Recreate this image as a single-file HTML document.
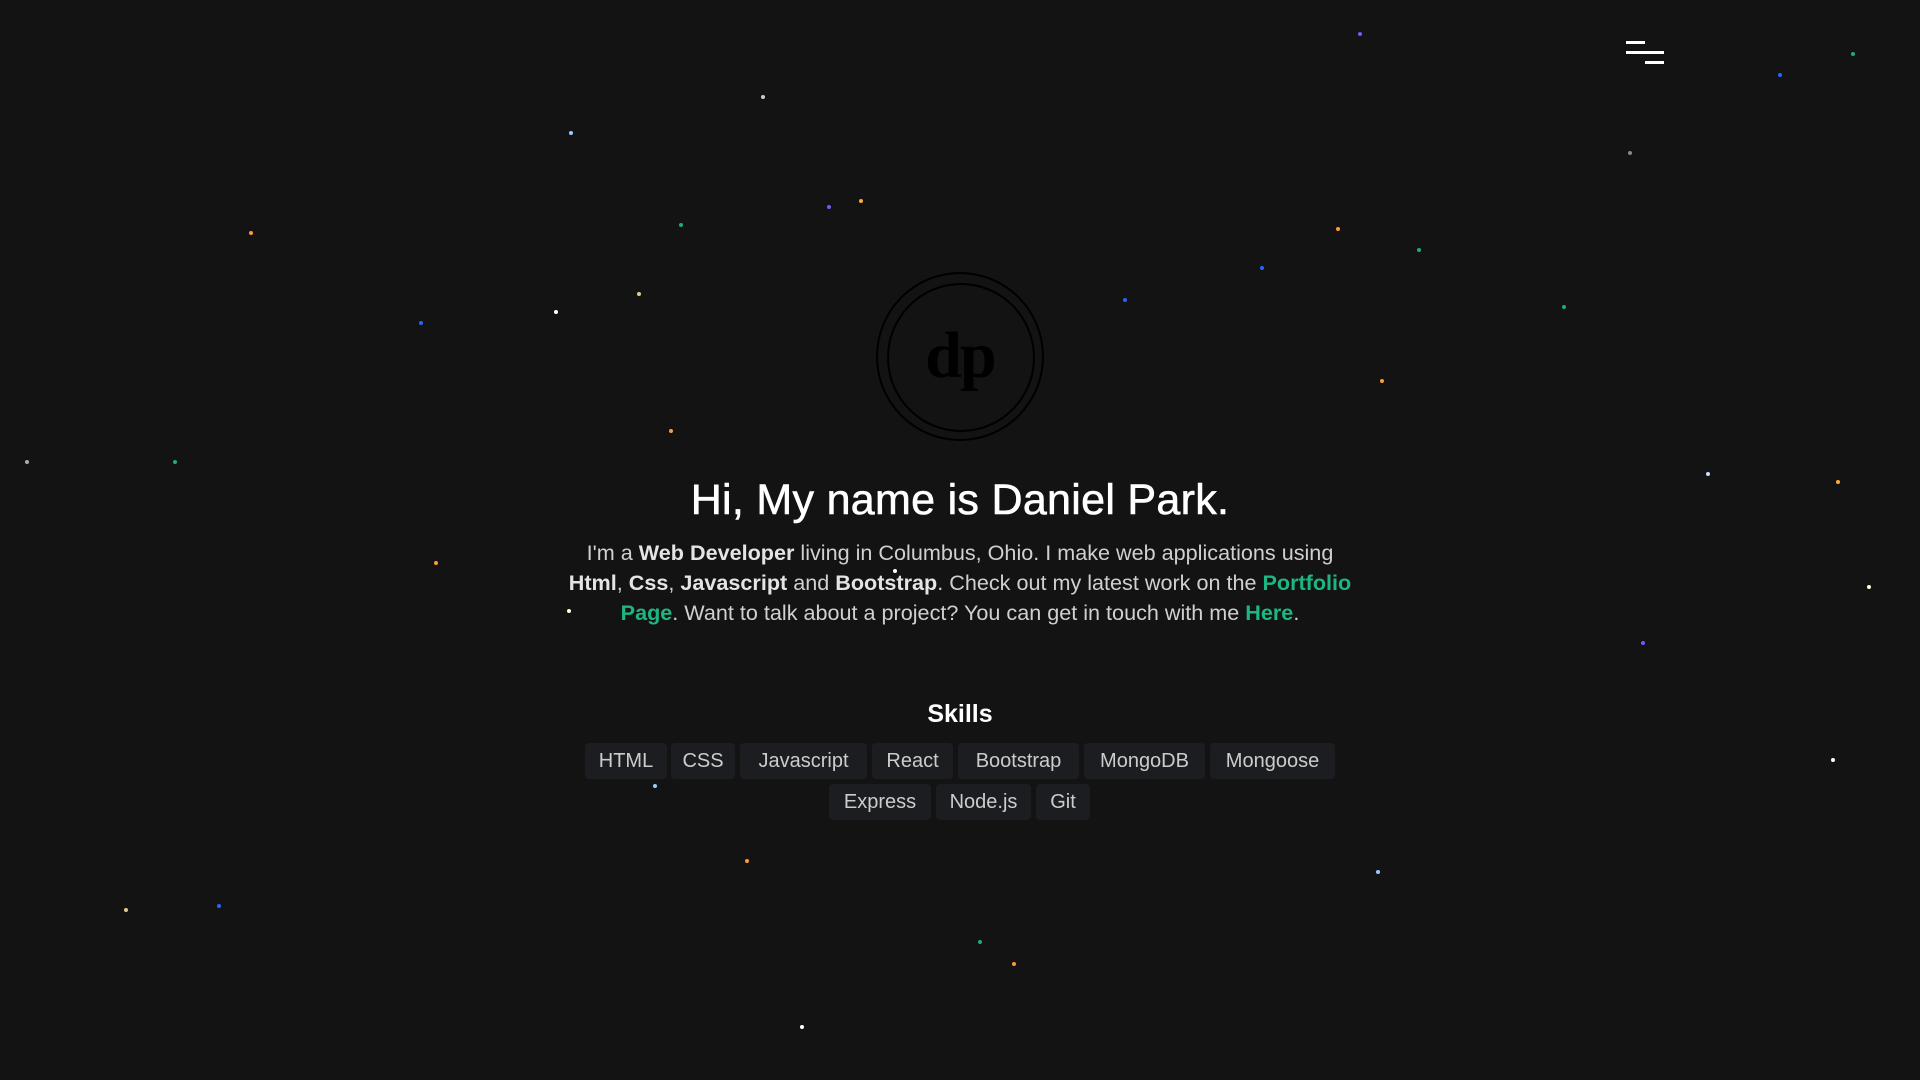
<!DOCTYPE html>
<html><head><meta charset="utf-8"><style>
html,body{margin:0;padding:0;width:1920px;height:1080px;background:#131313;overflow:hidden;font-family:"Liberation Sans",sans-serif;position:relative}
.s{position:absolute;width:4px;height:4px;border-radius:50%}
.hb span{position:absolute;height:3px;background:#fff}
.logo{position:absolute;left:876px;top:272px;width:164px;height:165px;border:2px solid #000;border-radius:50%}
.logo .in{position:absolute;left:9px;top:9px;width:144px;height:145px;border:2px solid #000;border-radius:50%}
h1{position:absolute;top:476px;left:0;width:1920px;text-align:center;margin:0;color:#fff;font-size:43px;font-weight:normal;letter-spacing:0.3px;-webkit-text-stroke:0.6px #fff}
p{position:absolute;top:538px;left:460px;width:1000px;text-align:center;margin:0;color:#d0d0d0;font-size:21.6px;line-height:30px;white-space:nowrap}
p b{color:#e4e4e4}
p a{color:#1db584;font-weight:bold;text-decoration:none}
h2{position:absolute;top:700px;left:0;width:1920px;text-align:center;margin:0;color:#fff;font-size:25px}
.t{position:absolute;height:36px;line-height:36px;background:#1c1d20;color:#ccc;font-size:20px;text-align:center;border-radius:4px;white-space:nowrap}
</style></head><body>
<div class="hb"><span style="left:1626px;top:41px;width:19px"></span><span style="left:1626px;top:51px;width:38px"></span><span style="left:1645px;top:61px;width:19px"></span></div>
<div class="logo"><div class="in"></div></div>
<div style="position:absolute;left:876px;top:318px;width:168px;text-align:center;font-family:'Liberation Serif',serif;font-weight:bold;font-size:66px;color:#000;letter-spacing:-2px">dp</div>
<h1>Hi, My name is Daniel Park.</h1>
<p>I'm a <b>Web Developer</b> living in Columbus, Ohio. I make web applications using<br><b>Html</b>, <b>Css</b>, <b>Javascript</b> and <b>Bootstrap</b>. Check out my latest work on the <a>Portfolio</a><br><a>Page</a>. Want to talk about a project? You can get in touch with me <a>Here</a>.</p>
<h2>Skills</h2>
<div class="t" style="left:585px;top:743px;width:82px">HTML</div>
<div class="t" style="left:671px;top:743px;width:64px">CSS</div>
<div class="t" style="left:740px;top:743px;width:127px">Javascript</div>
<div class="t" style="left:872px;top:743px;width:81px">React</div>
<div class="t" style="left:958px;top:743px;width:121px">Bootstrap</div>
<div class="t" style="left:1084px;top:743px;width:121px">MongoDB</div>
<div class="t" style="left:1210px;top:743px;width:125px">Mongoose</div>
<div class="t" style="left:829px;top:784px;width:102px">Express</div>
<div class="t" style="left:936px;top:784px;width:95px">Node.js</div>
<div class="t" style="left:1036px;top:784px;width:54px">Git</div>
<div class="s" style="left:569px;top:131px;background:#9cf"></div>
<div class="s" style="left:761px;top:95px;background:#ccc"></div>
<div class="s" style="left:249px;top:231px;background:#f93"></div>
<div class="s" style="left:859px;top:199px;background:#fa3"></div>
<div class="s" style="left:827px;top:205px;background:#75f"></div>
<div class="s" style="left:679px;top:223px;background:#2a7"></div>
<div class="s" style="left:554px;top:310px;background:#fff"></div>
<div class="s" style="left:419px;top:321px;background:#26f"></div>
<div class="s" style="left:637px;top:292px;background:#dc8"></div>
<div class="s" style="left:669px;top:429px;background:#f93"></div>
<div class="s" style="left:1336px;top:227px;background:#f93"></div>
<div class="s" style="left:1260px;top:266px;background:#26f"></div>
<div class="s" style="left:1123px;top:298px;background:#26f"></div>
<div class="s" style="left:1417px;top:248px;background:#2a7"></div>
<div class="s" style="left:1358px;top:32px;background:#75f"></div>
<div class="s" style="left:1778px;top:73px;background:#26f"></div>
<div class="s" style="left:1851px;top:52px;background:#2a7"></div>
<div class="s" style="left:1706px;top:472px;background:#cdf"></div>
<div class="s" style="left:1836px;top:480px;background:#fa3"></div>
<div class="s" style="left:1867px;top:585px;background:#ffd"></div>
<div class="s" style="left:1831px;top:758px;background:#fff"></div>
<div class="s" style="left:1376px;top:870px;background:#9cf"></div>
<div class="s" style="left:1012px;top:962px;background:#f93"></div>
<div class="s" style="left:978px;top:940px;background:#2a7"></div>
<div class="s" style="left:800px;top:1025px;background:#fff"></div>
<div class="s" style="left:653px;top:784px;background:#9cf"></div>
<div class="s" style="left:217px;top:904px;background:#26f"></div>
<div class="s" style="left:124px;top:908px;background:#dc8"></div>
<div class="s" style="left:434px;top:561px;background:#f93"></div>
<div class="s" style="left:25px;top:460px;background:#aaa"></div>
<div class="s" style="left:173px;top:460px;background:#2a7"></div>
<div class="s" style="left:567px;top:609px;background:#ffd"></div>
<div class="s" style="left:893px;top:569px;background:#fff"></div>
<div class="s" style="left:1380px;top:379px;background:#f93"></div>
<div class="s" style="left:1562px;top:305px;background:#2a7"></div>
<div class="s" style="left:1641px;top:641px;background:#75f"></div>
<div class="s" style="left:745px;top:859px;background:#f93"></div>
<div class="s" style="left:1628px;top:151px;background:#888"></div>
</body></html>
